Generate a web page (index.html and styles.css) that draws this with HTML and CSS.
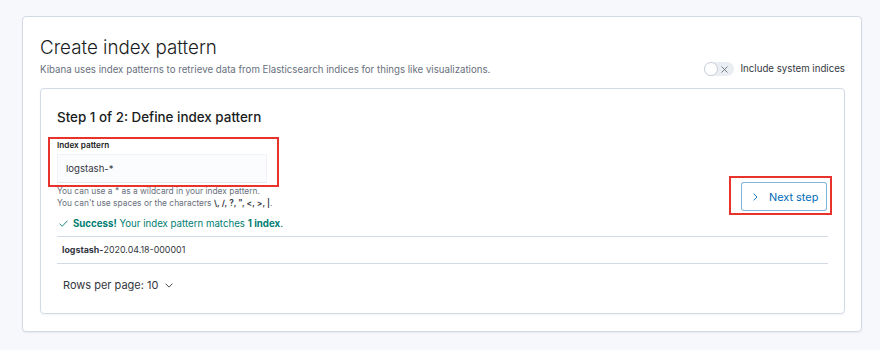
FILE: index.html
```html
<!DOCTYPE html>
<html>
<head>
<meta charset="utf-8">
<link rel="stylesheet" href="styles.css">
</head>
<body>
<div class="page">
  <div class="card">
    <div class="header">
      <div class="header-text">
        <h1 class="title">Create index pattern</h1>
        <p class="subtitle">Kibana uses index patterns to retrieve data from Elasticsearch indices for things like visualizations.</p>
      </div>
      <div class="toggle-wrap">
        <span class="toggle">
          <span class="knob"></span>
          <svg class="toggle-x" width="7" height="7" viewBox="0 0 7 7"><path d="M0.5 0.5L6.5 6.5M6.5 0.5L0.5 6.5" stroke="#69707d" stroke-width="0.9" fill="none"/></svg>
        </span>
        <span class="toggle-label">Include system indices</span>
      </div>
    </div>
    <div class="panel">
      <h2 class="step-title">Step 1 of 2: Define index pattern</h2>
      <div class="form-row">
        <div class="form-col">
          <div class="field">
            <label class="field-label">Index pattern</label>
            <div class="input">logstash-*</div>
          </div>
          <div class="help">
            <div>You can use a * as a wildcard in your index pattern.</div>
            <div>You can't use spaces or the characters <b>\, /, ?, ", &lt;, &gt;, |</b>.</div>
          </div>
          <div class="success">
            <svg class="check" width="9" height="7" viewBox="0 0 9 7"><path d="M0.5 3.6L3.2 6.3L8.5 0.7" stroke="#017d73" stroke-width="0.9" fill="none"/></svg>
            <span><b>Success!</b> Your index pattern matches <b>1 index</b>.</span>
          </div>
        </div>
        <div class="btn-wrap">
          <button class="next-btn">
            <svg class="chev" width="5" height="8" viewBox="0 0 5 8"><path d="M0.7 0.6L4 4L0.7 7.4" stroke="#006bb8" stroke-width="0.9" fill="none"/></svg>
            <span>Next step</span>
          </button>
        </div>
      </div>
      <div class="table">
        <div class="table-row"><b>logstash-</b>2020.04.18-000001</div>
      </div>
      <div class="pager">
        <span>Rows per page: 10</span>
        <svg class="down" width="8" height="5" viewBox="0 0 8 5"><path d="M0.6 0.7L4 4.1L7.4 0.7" stroke="#343741" stroke-width="0.9" fill="none"/></svg>
      </div>
    </div>
  </div>
</div>
</body>
</html>
```
FILE: styles.css
```css
* { box-sizing: border-box; }
html, body { margin: 0; padding: 0; }
body {
  background: #f7f8fc;
  font-family: Inter, "Noto Sans", sans-serif;
  color: #343741;
  width: 880px;
  height: 350px;
  overflow: hidden;
}
.page { padding: 16px 18px 0 22px; }
.card {
  width: 840px;
  height: 316px;
  background: #fff;
  border: 1px solid #d3dae6;
  border-radius: 4px;
  box-shadow: 0 1px 2px rgba(0,0,0,0.06);
  padding: 20px 16px 17px 17px;
  display: flex;
  flex-direction: column;
}
.header {
  display: flex;
  justify-content: space-between;
  align-items: flex-end;
  padding-bottom: 12px;
}
.title {
  margin: 0;
  font-size: 18.8px;
  font-weight: 300;
  line-height: 22px;
  color: #1a1c21;
}
.subtitle {
  margin: 5px 0 0;
  font-size: 9.7px;
  line-height: 12px;
  color: #69707d;
}
.toggle-wrap {
  display: flex;
  align-items: center;
  gap: 7px;
  height: 14px;
}
.toggle {
  width: 30px;
  height: 14px;
  border-radius: 7px;
  background: #eaedf2;
  display: flex;
  align-items: center;
  justify-content: space-between;
  padding-right: 6px;
}
.knob {
  width: 14px;
  height: 14px;
  border-radius: 50%;
  background: #fff;
  border: 1px solid #c9ced7;
}
.toggle-x { display: block; }
.toggle-label { font-size: 9.7px; color: #343741; line-height: 14px; }
.panel {
  flex: 1;
  border: 1px solid #d3dae6;
  border-radius: 4px;
  box-shadow: 0 1px 2px rgba(0,0,0,0.05);
  padding: 19px 16px 0 16px;
}
.step-title {
  margin: 0;
  font-size: 13.4px;
  font-weight: 500;
  line-height: 18px;
  color: #1a1c21;
}
.form-row {
  display: flex;
  justify-content: space-between;
  align-items: flex-start;
  margin-top: 14px;
}
.field {
  position: relative;
  width: 210px;
}
.field::before {
  content: "";
  position: absolute;
  left: -9px;
  top: -3px;
  right: -12px;
  bottom: -4px;
  border: 2px solid #e8322c;
}
.field-label {
  display: block;
  font-size: 8.2px;
  font-weight: 600;
  line-height: 11px;
  color: #1a1c21;
}
.input {
  margin-top: 3px;
  height: 29px;
  background: #fbfcfd;
  border: 1px solid #f0f2f5;
  border-bottom-color: #e3e7ee;
  padding-left: 8px;
  font-size: 9.6px;
  line-height: 27px;
  color: #343741;
}
.help {
  margin-top: 2px;
  font-size: 8.4px;
  line-height: 12px;
  color: #69707d;
}
.help b { color: #343741; font-weight: 600; }
.success {
  margin-top: 8px;
  display: flex;
  align-items: center;
  gap: 5px;
  padding-left: 2px;
  font-size: 9.7px;
  line-height: 13px;
  color: #017d73;
}
.success b { font-weight: 700; }
.btn-wrap {
  position: relative;
  margin-top: 42px;
  margin-right: 1px;
}
.btn-wrap::before {
  content: "";
  position: absolute;
  left: -12px;
  right: -5px;
  top: -6px;
  bottom: -4px;
  border: 2px solid #e8322c;
}
.next-btn {
  display: flex;
  align-items: center;
  gap: 11px;
  width: 86px;
  height: 29px;
  padding: 0 0 0 11px;
  background: #fff;
  border: 1px solid rgba(0,107,184,0.5);
  border-radius: 3px;
  font-family: Inter, "Noto Sans", sans-serif;
  font-size: 10.9px;
  color: #006bb8;
}
.chev { display: block; }
.table {
  margin-top: 6px;
  border-top: 1px solid #d3dae6;
  border-bottom: 1px solid #d3dae6;
}
.table-row {
  height: 26px;
  line-height: 26px;
  padding-left: 5px;
  font-size: 8.9px;
  color: #343741;
}
.table-row b { font-weight: 700; }
.pager {
  display: flex;
  align-items: center;
  gap: 7px;
  margin-top: 14px;
  padding-left: 6px;
  font-size: 11px;
  line-height: 14px;
  color: #343741;
}
.down { display: block; }
```
